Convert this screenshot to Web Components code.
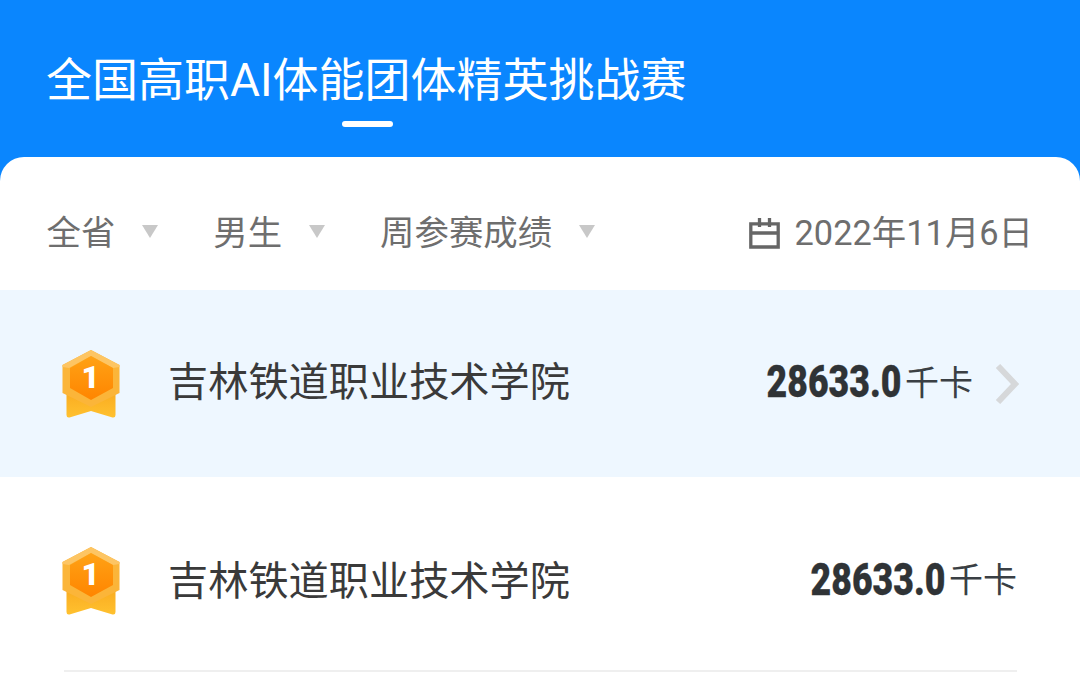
<!DOCTYPE html>
<html lang="zh">
<head>
<meta charset="utf-8">
<style>
  html, body { margin: 0; padding: 0; background: #fff; overflow: hidden; }
  body { width: 1080px; height: 678px; font-family: "Roboto", "Noto Sans CJK SC", sans-serif; }
</style>
</head>
<body>
<rank-page>
  <rank-header title="全国高职AI体能团体精英挑战赛"></rank-header>
  <rank-card>
    <rank-filters date="2022年11月6日">
      <filter-item>全省</filter-item>
      <filter-item>男生</filter-item>
      <filter-item>周参赛成绩</filter-item>
    </rank-filters>
    <rank-row name="吉林铁道职业技术学院" score="28633.0" unit="千卡" rank="1" mine></rank-row>
    <rank-row name="吉林铁道职业技术学院" score="28633.0" unit="千卡" rank="1"></rank-row>
  </rank-card>
</rank-page>

<script>
class RankPage extends HTMLElement {
  constructor() {
    super();
    this.attachShadow({ mode: 'open' }).innerHTML = `
      <style>
        :host { display: flex; flex-direction: column; height: 678px; background: #0a86fe; overflow: hidden; }
      </style>
      <slot></slot>`;
  }
}

class RankHeader extends HTMLElement {
  constructor() {
    super();
    this.attachShadow({ mode: 'open' }).innerHTML = `
      <style>
        :host { display: block; height: 157px; box-sizing: border-box; padding: 50px 0 0 46px; color: #fff; }
        .tab { display: inline-flex; flex-direction: column; align-items: center; }
        .text { font-size: 46px; line-height: 60px; white-space: nowrap; }
        .bar { width: 51px; height: 6px; border-radius: 3px; background: #fff; margin: 11px 0 0 2px; }
      </style>
      <div class="tab">
        <div class="text"></div>
        <div class="bar"></div>
      </div>`;
  }
  connectedCallback() {
    this.shadowRoot.querySelector('.text').textContent = this.getAttribute('title');
  }
}

class RankCard extends HTMLElement {
  constructor() {
    super();
    this.attachShadow({ mode: 'open' }).innerHTML = `
      <style>
        :host { display: block; flex: 1; background: #fff; border-radius: 24px 24px 0 0; overflow: hidden; }
      </style>
      <slot></slot>`;
  }
}

class RankFilters extends HTMLElement {
  constructor() {
    super();
    this.attachShadow({ mode: 'open' }).innerHTML = `
      <style>
        :host { display: flex; align-items: center; height: 133px; box-sizing: border-box; padding: 13px 47px 0 46.5px; color: #6e6e6e; font-size: 34.4px; }
        .list { display: flex; gap: 55px; flex: 1; }
        .date { display: flex; align-items: center; gap: 15px; white-space: nowrap; }
        svg { display: block; margin-top: 7px; }
      </style>
      <div class="list"><slot></slot></div>
      <div class="date">
        <svg width="31" height="31" viewBox="0 0 31 31">
          <path d="M1.8 5.8H29.2V29H1.8Z M1.8 15H29.2 M10.5 0V9 M20.5 0V9" fill="none" stroke="#666" stroke-width="3.3"/>
        </svg>
        <span class="value"></span>
      </div>`;
  }
  connectedCallback() {
    this.shadowRoot.querySelector('.value').textContent = this.getAttribute('date');
  }
}

class FilterItem extends HTMLElement {
  constructor() {
    super();
    this.attachShadow({ mode: 'open' }).innerHTML = `
      <style>
        :host { display: flex; align-items: center; gap: 27px; white-space: nowrap; }
        i { width: 0; height: 0; border-left: 8.5px solid transparent; border-right: 8.5px solid transparent; border-top: 13px solid #c8c8c8; margin-top: 3px; }
      </style>
      <slot></slot><i></i>`;
  }
}

class RankMedal extends HTMLElement {
  constructor() {
    super();
    this.attachShadow({ mode: 'open' }).innerHTML = `
      <style>
        :host { display: block; position: relative; width: 58px; height: 70px; }
        svg { display: block; }
        span { position: absolute; left: 0; right: 1px; top: 11px; text-align: center; color: #fff; font: 900 31px/36px "Roboto", sans-serif; }
      </style>
      <svg width="58" height="70" viewBox="0 0 58 70">
        <defs>
          <linearGradient id="rib" x1="0" y1="0" x2="0" y2="1">
            <stop offset="0" stop-color="#f9a91f"/>
            <stop offset="1" stop-color="#ffc12f"/>
          </linearGradient>
          <linearGradient id="hex" x1="0" y1="0" x2="0" y2="1">
            <stop offset="0" stop-color="#ffa215"/>
            <stop offset="1" stop-color="#ff8500"/>
          </linearGradient>
        </defs>
        <path d="M4.5 40V66Q4.5 69 7.5 68.5L29 62L50.5 68.5Q53.5 69 53.5 66V40Z" fill="url(#rib)"/>
        <path d="M29 1L57.5 16V44L29 58L0.5 44V16Z" fill="#fbb539"/>
        <path d="M29 1L57.5 16V18L51 19L29 7L7 19L0.5 18V16Z" fill="#fdc563"/>
        <path d="M29 7L51 19V39L29 51L8 39V19Z" fill="url(#hex)"/>
      </svg>
      <span></span>`;
  }
  connectedCallback() {
    this.shadowRoot.querySelector('span').textContent = this.getAttribute('rank');
  }
}

class RankRow extends HTMLElement {
  constructor() {
    super();
    this.attachShadow({ mode: 'open' }).innerHTML = `
      <style>
        :host { display: block; }
        :host([mine]) { background: #eef7ff; }
        .row { display: flex; align-items: center; height: 187px; box-sizing: border-box; margin: 0 61px 0 62px; }
        :host(:not([mine])) .row { height: 195px; padding-top: 14px; border-bottom: 2px solid #efefef; margin-left: 64px; margin-right: 63px; }
        rank-medal { margin-right: 48px; }
        :host(:not([mine])) rank-medal { margin-left: -2px; }
        .name { flex: 1; font-size: 40.2px; color: #3a3a3a; white-space: nowrap; margin-top: -7px; }
        :host([mine]) .name { margin-top: -11px; }
        .score { display: flex; align-items: center; color: #2f3336; }
        b { font: 900 44px "Roboto", sans-serif; -webkit-text-stroke: .3px #2f3336; transform: scaleX(.81); transform-origin: right center; margin-top: -1px; }
        :host([mine]) b { margin-top: -3px; }
        .unit { font-size: 34px; margin-left: 4px; margin-top: -6px; color: #3a3f44; }
        svg { display: none; margin-left: 22px; }
        :host([mine]) svg { display: block; }
      </style>
      <div class="row">
        <rank-medal></rank-medal>
        <div class="name"></div>
        <div class="score">
          <b></b>
          <span class="unit"></span>
          <svg width="24" height="40" viewBox="0 0 24 40">
            <path d="M3 2L20 20L3 38" fill="none" stroke="#d6d8da" stroke-width="6"/>
          </svg>
        </div>
      </div>`;
  }
  connectedCallback() {
    const root = this.shadowRoot;
    root.querySelector('rank-medal').setAttribute('rank', this.getAttribute('rank'));
    root.querySelector('rank-medal').shadowRoot.querySelector('span').textContent = this.getAttribute('rank');
    root.querySelector('.name').textContent = this.getAttribute('name');
    root.querySelector('b').textContent = this.getAttribute('score');
    root.querySelector('.unit').textContent = this.getAttribute('unit');
  }
}

customElements.define('rank-page', RankPage);
customElements.define('rank-header', RankHeader);
customElements.define('rank-card', RankCard);
customElements.define('rank-filters', RankFilters);
customElements.define('filter-item', FilterItem);
customElements.define('rank-medal', RankMedal);
customElements.define('rank-row', RankRow);
</script>
</body>
</html>
